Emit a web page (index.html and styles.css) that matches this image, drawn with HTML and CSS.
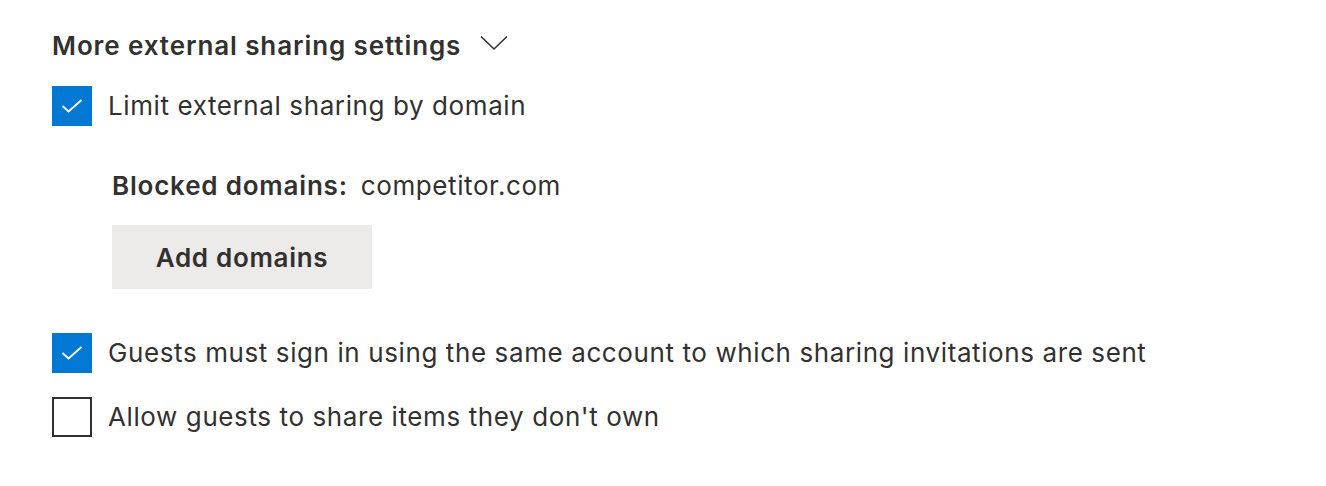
FILE: index.html
```html
<!DOCTYPE html>
<html>
<head>
<meta charset="utf-8">
<link rel="stylesheet" href="styles.css">
</head>
<body>
<div class="panel">
  <div class="section-head">
    <span class="section-title">More external sharing settings</span>
    <svg class="chevron" width="28" height="16" viewBox="0 0 28 16"><path d="M1 1.5 L14 14 L27 1.5" fill="none" stroke="#323130" stroke-width="1.6"/></svg>
  </div>
  <label class="check-row">
    <span class="box checked"><svg width="22" height="14" viewBox="0 0 22 14"><path d="M1.5 7 L7.5 12.5 L20.5 1" fill="none" stroke="#fff" stroke-width="1.8"/></svg></span>
    <span class="check-label">Limit external sharing by domain</span>
  </label>
  <div class="domains">
    <div class="domain-line"><span class="domain-key">Blocked domains:</span><span class="domain-val">competitor.com</span></div>
    <button class="btn">Add domains</button>
  </div>
  <div class="check-list">
    <label class="check-row">
      <span class="box checked"><svg width="22" height="14" viewBox="0 0 22 14"><path d="M1.5 7 L7.5 12.5 L20.5 1" fill="none" stroke="#fff" stroke-width="1.8"/></svg></span>
      <span class="check-label">Guests must sign in using the same account to which sharing invitations are sent</span>
    </label>
    <label class="check-row">
      <span class="box"></span>
      <span class="check-label">Allow guests to share items they don't own</span>
    </label>
  </div>
</div>
</body>
</html>
```
FILE: styles.css
```css
html, body {
  margin: 0;
  background: #ffffff;
}
body {
  font-family: "Inter", "Open Sans", sans-serif;
  color: #323130;
  letter-spacing: 0.6px;
}
.panel {
  padding: 30px 0 0 52px;
  display: flex;
  flex-direction: column;
}
.section-head {
  display: flex;
  align-items: center;
  gap: 19px;
  height: 32px;
}
.section-title {
  font-size: 26px;
  font-weight: 600;
  line-height: 32px;
  letter-spacing: 0.9px;
}
.chevron {
  margin-top: -6px;
}
.check-row {
  display: flex;
  align-items: center;
  gap: 16px;
  height: 40px;
}
.section-head + .check-row {
  margin-top: 24px;
}
.box {
  width: 40px;
  height: 40px;
  box-sizing: border-box;
  border: 2px solid #323130;
  display: flex;
  align-items: center;
  justify-content: center;
  flex: none;
}
.box.checked {
  background: #0078d4;
  border-color: #0078d4;
}
.check-label {
  font-size: 26px;
  line-height: 32px;
}
.domains {
  padding-left: 60px;
  margin-top: 44px;
  display: flex;
  flex-direction: column;
  align-items: flex-start;
}
.domain-line {
  font-size: 26px;
  line-height: 32px;
  display: flex;
  gap: 13px;
}
.domain-key {
  font-weight: 600;
  letter-spacing: 0.8px;
}
.btn {
  margin-top: 23px;
  width: 260px;
  height: 64px;
  border: none;
  background: #edebe9;
  color: #323130;
  font-family: inherit;
  font-size: 26px;
  font-weight: 600;
  letter-spacing: 0.7px;
  padding: 0;
}
.check-list {
  margin-top: 44px;
  display: flex;
  flex-direction: column;
  gap: 24px;
}
```
